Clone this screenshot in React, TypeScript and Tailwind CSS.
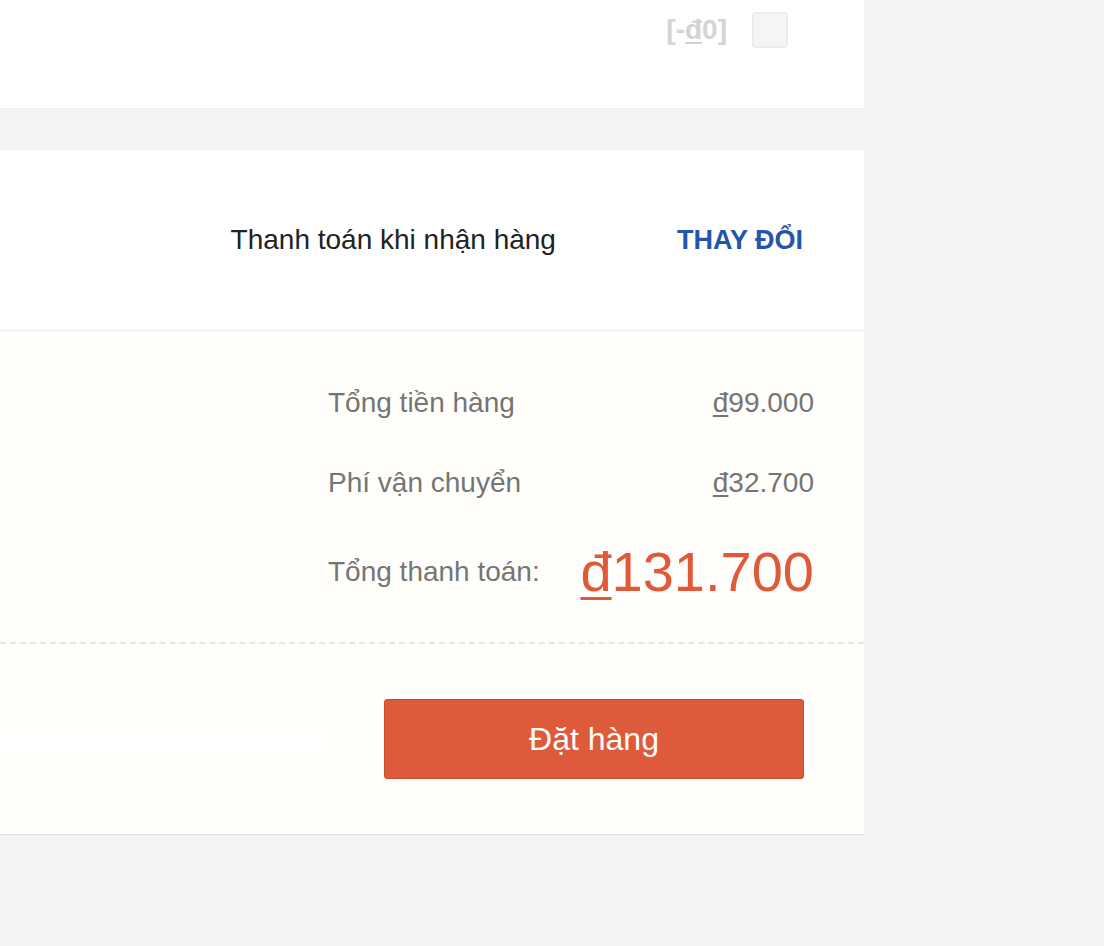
function Dong() {
  return <span className="underline decoration-[0.06em] underline-offset-[0.1em]">đ</span>;
}

export default function App() {
  const font = { fontFamily: '"Liberation Sans", Arial, Helvetica, sans-serif' };

  return (
    <div className="min-h-[946px] w-[1104px] bg-[#f4f4f4]" style={font}>
      {/* Voucher card (tail end) */}
      <div className="w-[864px] h-[109px] bg-white border-b border-[#efefef]">
        <div className="flex items-center justify-end h-[60px] pr-[76px]">
          <span className="text-[28px] font-bold text-[#d4d4d4] leading-none">
            [-<Dong />0]
          </span>
          <span className="ml-[25px] w-[36px] h-[36px] rounded-[4px] border-2 border-[#ececec] bg-[#f5f5f5]" />
        </div>
      </div>

      {/* Payment + summary card */}
      <div className="w-[864px] mt-[41px] bg-white shadow-[0_1px_1px_rgba(0,0,0,0.08)]">
        <div className="flex items-center justify-end h-[181px] pr-[61px] border-b border-[#efefef]">
          <span className="text-[28px] text-[#222222] leading-none">Thanh toán khi nhận hàng</span>
          <button className="ml-[121px] text-[27px] font-bold text-[#2355a8] leading-none">THAY ĐỔI</button>
        </div>

        <div className="bg-[#fffefa]">
          <div className="pt-[32px] pb-[21px] pr-[50px] flex flex-col items-end">
            <div className="flex items-center h-[80px]">
              <span className="w-[236px] text-[28px] text-[#757575]">Tổng tiền hàng</span>
              <span className="w-[250px] text-right text-[28px] text-[#757575]">
                <Dong />99.000
              </span>
            </div>
            <div className="flex items-center h-[80px]">
              <span className="w-[236px] text-[28px] text-[#757575]">Phí vận chuyển</span>
              <span className="w-[250px] text-right text-[28px] text-[#757575]">
                <Dong />32.700
              </span>
            </div>
            <div className="flex items-center h-[98px]">
              <span className="w-[236px] text-[28px] text-[#757575]">Tổng thanh toán:</span>
              <span className="w-[250px] text-right text-[56px] leading-none text-[#e05a3a]">
                <Dong />131.700
              </span>
            </div>
          </div>

          <div className="border-t-2 border-dashed border-[#e6e6e6]" />

          <div className="flex items-center justify-between h-[190px] pr-[60px]">
            <div className="w-[333px] h-[34px] bg-[#fffffd]" />
            <button className="w-[420px] h-[80px] rounded-[3px] bg-[#dd5a3b] border border-[#c84b30] text-white text-[32px]">
              Đặt hàng
            </button>
          </div>
        </div>
      </div>
    </div>
  );
}
